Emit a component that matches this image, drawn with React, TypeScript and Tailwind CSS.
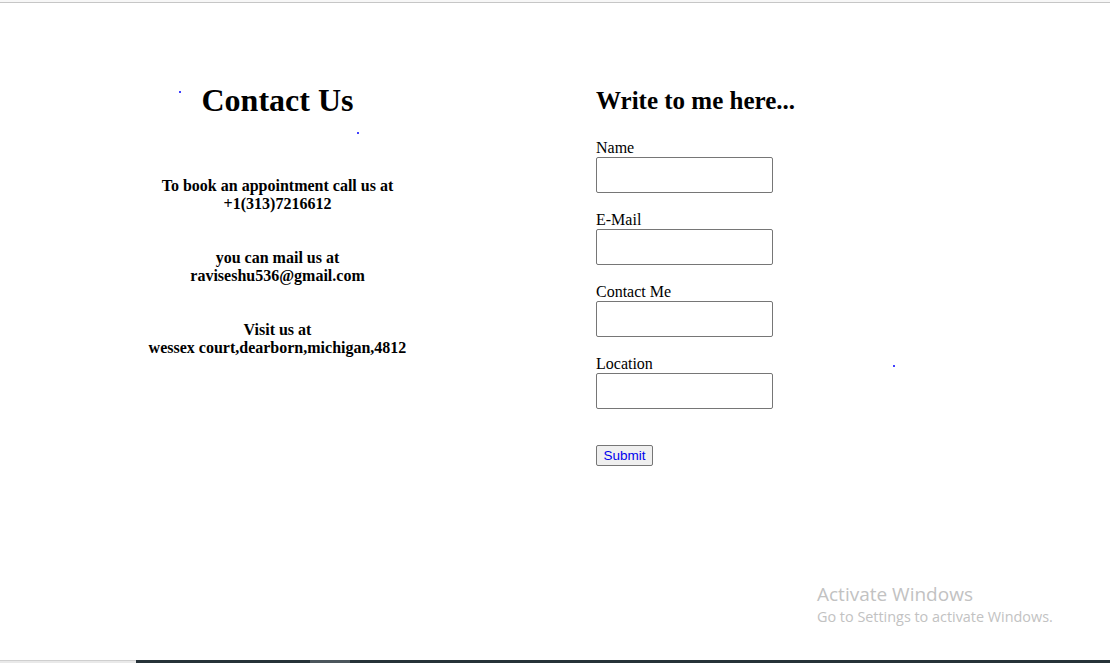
import React from "react";

const serif = { fontFamily: '"Liberation Serif", "Times New Roman", serif' };

function Field({ label, first }: { label: string; first?: boolean }) {
  return (
    <div className={first ? "" : "mt-[18px]"}>
      <label className="block text-[16px] leading-[18px] text-black">{label}</label>
      <input
        type="text"
        className="block w-[177px] h-[36px] border border-[#767676] rounded-[2px] bg-white"
      />
    </div>
  );
}

export default function App() {
  return (
    <div className="relative w-[1110px] h-[663px] bg-white flex flex-col overflow-hidden" style={serif}>
      <div className="h-[2px] bg-[#f7f7f7]" />
      <div className="h-[1px] bg-[#c6c6c6]" />
      <div className="flex-1 flex">
        <div className="w-[555px] text-center pt-[79px]">
          <h1 className="text-[32px] font-bold leading-[37px] text-black">Contact Us</h1>
          <div className="mt-[58px] text-[16px] font-bold leading-[18px] text-black">
            <p>To book an appointment call us at<br />+1(313)7216612</p>
            <p className="mt-[36px]">you can mail us at<br />raviseshu536@gmail.com</p>
            <p className="mt-[36px]">Visit us at<br />wessex court,dearborn,michigan,4812</p>
          </div>
        </div>
        <div className="pl-[41px] pt-[83px]">
          <h2 className="text-[25px] font-bold leading-[29px] text-black">Write to me here...</h2>
          <form className="mt-[24px]">
            <Field label="Name" first />
            <Field label="E-Mail" />
            <Field label="Contact Me" />
            <Field label="Location" />
            <button
              type="button"
              className="mt-[36px] h-[21px] w-[57px] border border-[#767676] rounded-[2px] bg-[#efefef] text-[13.5px] text-[#0000ee] leading-none font-['Liberation_Sans',Arial,sans-serif]"
            >
              Submit
            </button>
          </form>
        </div>
      </div>
      <div className="h-[3px] flex">
        <div className="w-[136px] bg-[#e9e9e9] border-t border-[#cfcfcf]" />
        <div className="w-[174px] bg-[#263238]" />
        <div className="w-[40px] bg-[#4b565c]" />
        <div className="flex-1 bg-[#263238]" />
      </div>

      <span className="absolute left-[179px] top-[91px] w-[2px] h-[2px] bg-[#4040ff]" />
      <span className="absolute left-[357px] top-[132px] w-[2px] h-[2px] bg-[#4040ff]" />
      <span className="absolute left-[893px] top-[365px] w-[2px] h-[2px] bg-[#4040ff]" />

      <div
        className="absolute left-[817px] top-[582px] text-[#c2c2c2] pointer-events-none"
        style={{ fontFamily: '"Open Sans", "Noto Sans", sans-serif' }}
      >
        <div className="text-[19px] leading-[25px]">Activate Windows</div>
        <div className="text-[14.4px] leading-[20px]">Go to Settings to activate Windows.</div>
      </div>
    </div>
  );
}
